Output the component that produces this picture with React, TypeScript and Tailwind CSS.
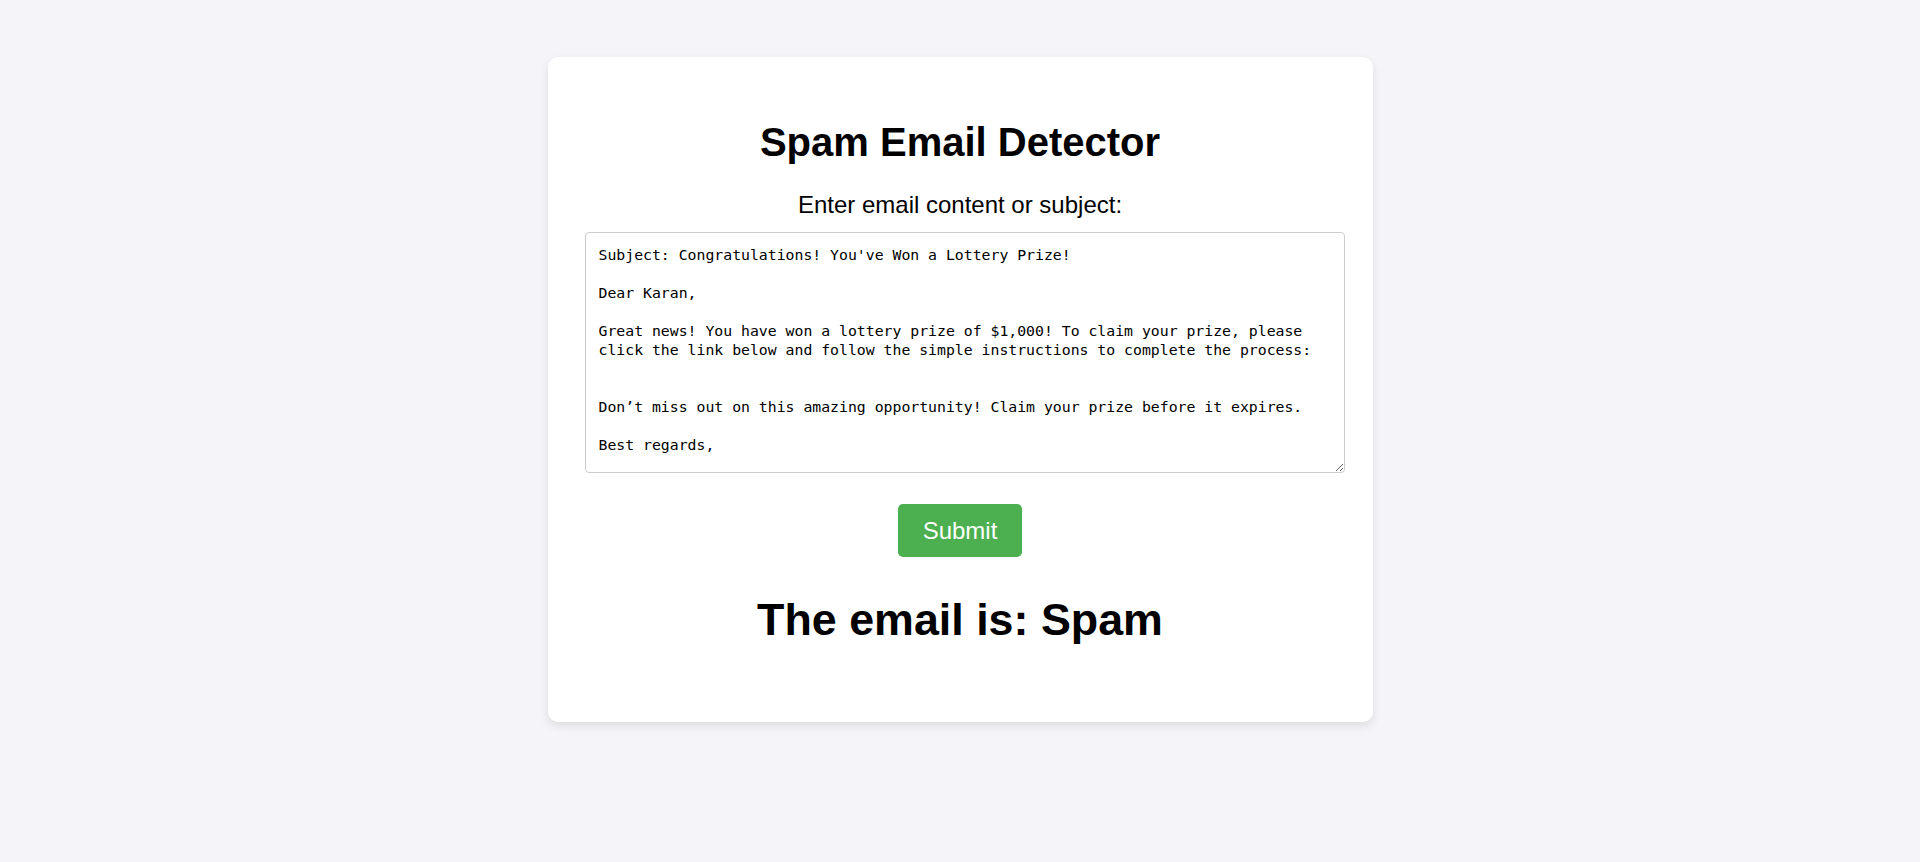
import React, { useState } from 'react';

const SAMPLE = `Subject: Congratulations! You've Won a Lottery Prize!

Dear Karan,

Great news! You have won a lottery prize of $1,000! To claim your prize, please click the link below and follow the simple instructions to complete the process:


Don’t miss out on this amazing opportunity! Claim your prize before it expires.

Best regards,`;

function SpamDetector() {
  const [text, setText] = useState(SAMPLE);
  const [result, setResult] = useState('Spam');

  const handleSubmit = () => {
    // tiny keyword check, just enough for the demo
    const hit = /prize|lottery|won|claim/i.test(text);
    setResult(hit ? 'Spam' : 'Not Spam');
  };

  return (
    <div className="w-[825px] mx-auto bg-white rounded-[10px] shadow-[0_4px_10px_rgba(0,0,0,0.1)] pt-[62px] pb-[77px] text-center text-black font-['Liberation_Sans',Arial,sans-serif]">
      <h1 className="text-[40px] leading-[46px] font-bold">Spam Email Detector</h1>
      <label htmlFor="email" className="block mt-[26px] text-[24px] leading-[27px]">
        Enter email content or subject:
      </label>
      <textarea
        id="email"
        value={text}
        onChange={(e) => setText(e.target.value)}
        className="block ml-[37px] mt-[14px] w-[760px] h-[241px] py-[12px] pl-[13px] pr-[12px] bg-white border border-[#ccc] rounded-[4px] text-left text-[14.8px] leading-[19px] font-['DejaVu_Sans_Mono','Liberation_Mono',monospace] outline-none"
      />
      <button
        onClick={handleSubmit}
        className="mt-[31px] w-[124px] h-[53px] bg-[#4caf50] text-white text-[24px] rounded-[5px] cursor-pointer"
      >
        Submit
      </button>
      <h2 className="mt-[36px] text-[44.8px] leading-[52px] font-bold">The email is: {result}</h2>
    </div>
  );
}

export default function App() {
  return (
    <div className="min-h-screen bg-[#f4f4f9] pt-[57px]">
      <SpamDetector />
    </div>
  );
}
